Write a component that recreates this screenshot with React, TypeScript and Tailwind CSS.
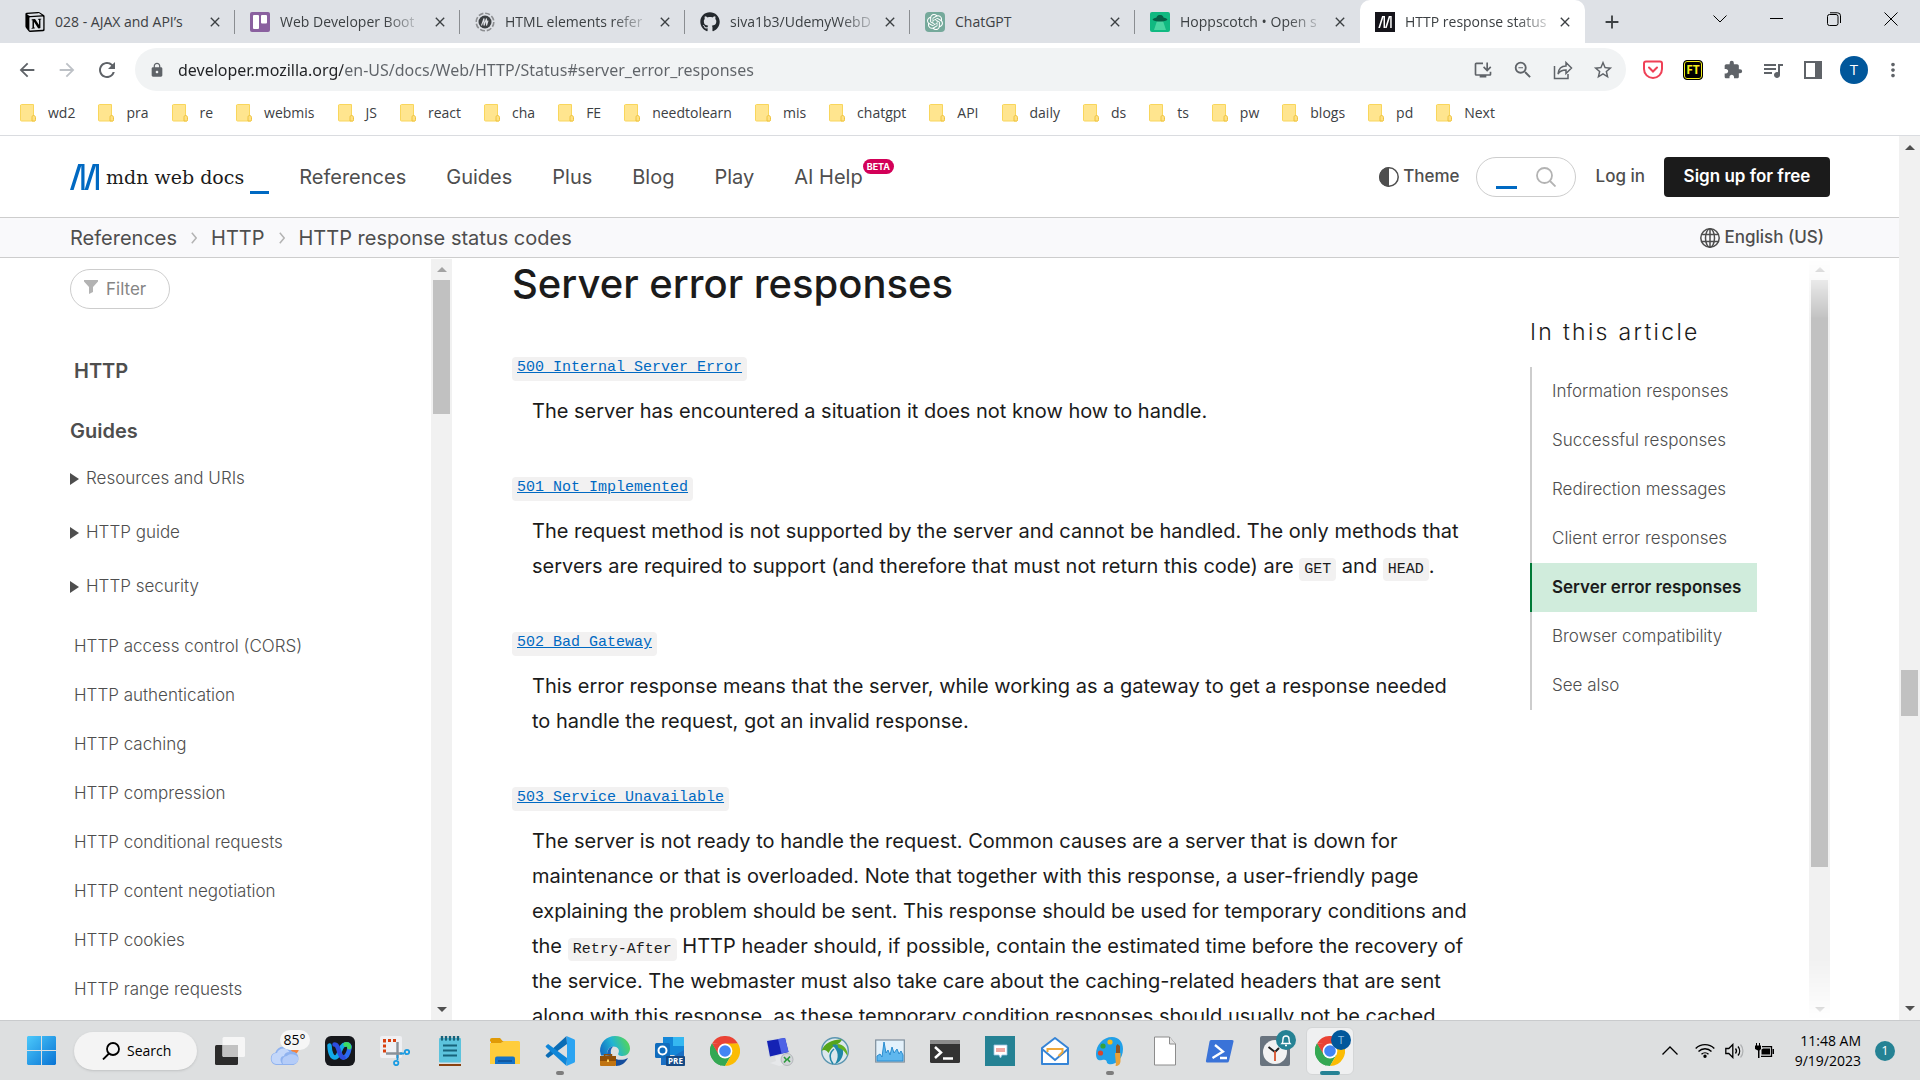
import type { ReactNode } from "react";
import { FaGithub } from "react-icons/fa";
import { SiNotion, SiOpenai } from "react-icons/si";
import {
  MdAdd,
  MdArrowBack,
  MdArrowForward,
  MdClose,
  MdExtension,
  MdLock,
  MdMoreVert,
  MdOutlineInstallDesktop,
  MdQueueMusic,
  MdRefresh,
  MdStarBorder,
  MdZoomOut,
} from "react-icons/md";

/* ---------- Browser chrome ---------- */

function MdnMark({ className }: { className?: string }) {
  return (
    <svg viewBox="0 0 29 26" className={className} fill="currentColor" aria-hidden="true">
      <path d="M8.200 0h3.600L3.600 26H0zM11.300 0h3.200v26h-3.200zM22.700 0h3.600L18.100 26h-3.600zM25.800 0H29v26h-3.200z" />
    </svg>
  );
}

const tabs: { title: string; icon: ReactNode; faded?: boolean; active?: boolean }[] = [
  { title: "028 - AJAX and API’s", icon: <SiNotion className="size-5 text-black" /> },
  {
    title: "Web Developer Boot",
    faded: true,
    icon: (
      <svg viewBox="0 0 20 20" className="size-5">
        <rect width="20" height="20" rx="2" fill="#8a609f" />
        <rect x="3" y="3" width="6" height="14" rx="1" fill="#fff" />
        <rect x="11" y="3" width="6" height="8.500" rx="1" fill="#fff" />
      </svg>
    ),
  },
  {
    title: "HTML elements refer",
    faded: true,
    icon: (
      <svg viewBox="0 0 20 20" className="size-5">
        <circle cx="10" cy="10" r="8.800" fill="none" stroke="#8b8d90" strokeWidth="1.600" strokeDasharray="5 1.900" />
        <circle cx="10" cy="10" r="6.500" fill="#3c4043" />
        <path d="M6.500 13.500 9 6.500v7l2.500-7v7l1.500-5" fill="none" stroke="#dee1e6" strokeWidth="1.100" />
      </svg>
    ),
  },
  { title: "siva1b3/UdemyWebD", faded: true, icon: <FaGithub className="size-5 text-[#24292e]" /> },
  {
    title: "ChatGPT",
    icon: (
      <span className="flex size-5 items-center justify-center rounded-sm bg-[#75a99b]">
        <SiOpenai className="size-4 text-white" />
      </span>
    ),
  },
  {
    title: "Hoppscotch • Open s",
    faded: true,
    icon: (
      <svg viewBox="0 0 20 20" className="size-5">
        <rect width="20" height="20" rx="2" fill="#10b981" />
        <path d="m7 9-3 9h12l-3-9z" fill="#6ee7b7" opacity=".6" />
        <path d="M2.500 7.500C4 6 6 5.800 6.500 5.600 7 3.500 8.500 3 10 3s3 .5 3.500 2.600c.5.200 2.500.4 4 1.900-1 1.500-4 2-7.500 2s-6.500-.5-7.500-2z" fill="#065f46" />
      </svg>
    ),
  },
  {
    title: "HTTP response status",
    faded: true,
    active: true,
    icon: (
      <span className="flex size-5 items-center justify-center bg-[#15141a]">
        <MdnMark className="h-3 w-4 text-white" />
      </span>
    ),
  },
];

function TabStrip() {
  return (
    <div className="flex h-[43px] shrink-0 items-stretch bg-[#dee1e6] pl-[10px] text-[#3c4043]">
      <div role="tablist" className="flex min-w-0">
        {tabs.map((t, i) => (
          <div
            key={t.title}
            role="tab"
            aria-selected={!!t.active}
            className={
              "flex w-[225px] min-w-0 items-center pl-[15px] pr-[10px] " + (t.active ? "rounded-t-[10px] bg-white" : "")
            }
          >
            {t.icon}
            <span className="ml-[10px] min-w-0 flex-1 whitespace-nowrap text-sm">
              <span
                className={
                  t.faded ? "[mask-image:linear-gradient(to_right,black_78%,rgb(0_0_0/0.25))]" : ""
                }
              >
                {t.title}
              </span>
            </span>
            <button aria-label={"Close " + t.title} className="ml-1 flex size-5 items-center justify-center">
              <MdClose className="size-4" />
            </button>
            {i < 5 ? <span className="-mr-[10px] ml-[9px] h-6 w-px bg-[#8a8d91]" /> : null}
          </div>
        ))}
      </div>
      <button aria-label="New tab" className="ml-[15px] flex w-6 items-center justify-center">
        <MdAdd className="size-[22px]" />
      </button>
      <div className="ml-auto flex pb-[6px] text-black">
        <button aria-label="Search tabs" className="flex w-[57px] items-center justify-center">
          <svg viewBox="0 0 14 8" className="h-2 w-[14px]" fill="none" stroke="currentColor">
            <path d="m.5.500 6.500 6.500 6.500-6.500" />
          </svg>
        </button>
        <button aria-label="Minimize" className="flex w-[57px] items-center justify-center">
          <span className="h-px w-[13px] bg-black" />
        </button>
        <button aria-label="Restore" className="flex w-[57px] items-center justify-center">
          <svg viewBox="0 0 14 14" className="size-[14px]" fill="none" stroke="currentColor">
            <rect x=".5" y="2.500" width="10.500" height="11" rx="2" />
            <path d="M3 .8h7.500a3 3 0 0 1 3 3V11" />
          </svg>
        </button>
        <button aria-label="Close window" className="flex w-[58px] items-center justify-center">
          <svg viewBox="0 0 14 14" className="size-[14px]" stroke="currentColor">
            <path d="m.5.500 13 13M13.500.500l-13 13" />
          </svg>
        </button>
      </div>
    </div>
  );
}

const iconButton = "flex w-10 shrink-0 items-center justify-center";

function AddressBar() {
  return (
    <div className="flex h-[53px] shrink-0 items-center px-[7px] text-[#5f6368]">
      <button aria-label="Back" className={iconButton}>
        <MdArrowBack className="size-[22px]" />
      </button>
      <button aria-label="Forward" className={iconButton}>
        <MdArrowForward className="size-[22px] text-[#bdc1c6]" />
      </button>
      <button aria-label="Reload" className={iconButton}>
        <MdRefresh className="size-6" />
      </button>
      <div className="ml-2 flex h-[43px] min-w-0 flex-1 items-center rounded-full bg-[#f1f3f4] pl-[14px] pr-[3px]">
        <MdLock className="size-4 shrink-0" />
        <input
          aria-label="Address and search bar"
          defaultValue="developer.mozilla.org/en-US/docs/Web/HTTP/Status#server_error_responses"
          className="ml-[13px] min-w-0 flex-1 bg-[linear-gradient(to_right,#202124_165px,#5f6368_165px)] bg-clip-text font-['Noto_Sans',sans-serif] text-base text-transparent outline-none"
        />
        <button aria-label="Install app" className={iconButton}>
          <MdOutlineInstallDesktop className="size-5" />
        </button>
        <button aria-label="Zoom" className={iconButton}>
          <MdZoomOut className="size-[22px]" />
        </button>
        <button aria-label="Share" className={iconButton}>
          <svg viewBox="0 0 20 20" className="size-5" fill="none" stroke="currentColor" strokeWidth="1.500">
            <path d="M1.500 6v12.500H15V14M5 14c.5-5 3.500-8 8-8V2.500l5.500 5.500-5.500 5.500V10c-4 0-6.500 1.500-8 4z" />
          </svg>
        </button>
        <button aria-label="Bookmark" className={iconButton}>
          <MdStarBorder className="size-[22px]" />
        </button>
      </div>
      <div className="ml-[7px] flex items-center">
        <button aria-label="Pocket" className={iconButton}>
          <svg viewBox="0 0 20 20" className="size-5" fill="none" stroke="#ef4056" strokeWidth="2">
            <path d="M1 3.500C1 2 1.500 1.500 3 1.500h14c1.500 0 2 .5 2 2V9c0 5-4 9-9 9s-9-4-9-9z" />
            <path d="m6 7.500 4 4 4-4" strokeLinecap="round" />
          </svg>
        </button>
        <button aria-label="Font tool" className={iconButton}>
          <span className="flex size-5 items-center justify-center rounded-sm border border-black bg-black text-[12px] font-bold leading-none text-[#f4ee1a] ring-1 ring-inset ring-[#f4ee1a]">
            FT
          </span>
        </button>
        <button aria-label="Extensions" className={iconButton}>
          <MdExtension className="size-5" />
        </button>
        <button aria-label="Media" className={iconButton}>
          <MdQueueMusic className="size-6" />
        </button>
        <button aria-label="Side panel" className={iconButton}>
          <svg viewBox="0 0 18 18" className="size-[18px]">
            <path d="M1 1h16v16H1z" fill="none" stroke="currentColor" strokeWidth="2" />
            <path d="M11 1h6v16h-6z" fill="currentColor" />
          </svg>
        </button>
        <button
          aria-label="Profile"
          className="ml-[7px] flex size-7 items-center justify-center rounded-full bg-[#01579b] text-[15px] text-white"
        >
          T
        </button>
        <button aria-label="Menu" className="ml-[5px] flex w-10 items-center justify-center">
          <MdMoreVert className="size-[22px]" />
        </button>
      </div>
    </div>
  );
}

const bookmarks = [
  "wd2", "pra", "re", "webmis", "JS", "react", "cha", "FE", "needtolearn", "mis",
  "chatgpt", "API", "daily", "ds", "ts", "pw", "blogs", "pd", "Next",
];

function BookmarksBar() {
  return (
    <nav aria-label="Bookmarks" className="flex h-10 shrink-0 items-center gap-[23px] border-b border-[#dadce0] px-5 pb-[5px] text-sm text-[#3c4043]">
      {bookmarks.map((b) => (
        <button key={b} className="flex items-center gap-3 whitespace-nowrap">
          <svg viewBox="0 0 16 18" className="h-[18px] w-4">
            <path d="M1.500.5h12v13h1.500v3.500H1.500a1 1 0 0 1-1-1v-15z" fill="#ffe58f" stroke="#f9d65c" />
            <path d="M13.500 11.500c-1 0-1.500.5-1.500 2V17h2.500c.8 0 1-.5 1-1.500v-2c0-1-.6-2-2-2z" fill="#ffe083" stroke="#eec33d" />
          </svg>
          {b}
        </button>
      ))}
    </nav>
  );
}

/* ---------- Site header ---------- */

function SiteHeader() {
  return (
    <header className="flex h-[81px] shrink-0 items-center pl-[70px] pr-[69px] text-[#4e4e4e]">
      <a href="#home" aria-label="mdn web docs" className="flex shrink-0 items-center pt-px">
        <MdnMark className="h-[26px] w-[29px] text-[#0069c2]" />
        <span className="ml-[7px] font-['DejaVu_Serif',serif] text-[19px] text-[#1b1b1b]">mdn web docs</span>
        <span className="ml-[6px] mt-[31px] h-[3px] w-[19px] bg-[#0069c2]" />
      </a>
      <nav aria-label="Main" className="ml-[30px] flex gap-10 text-xl leading-none">
        {["References", "Guides", "Plus", "Blog", "Play"].map((n) => (
          <button key={n}>{n}</button>
        ))}
        <a href="#ai-help" className="relative">
          AI Help
          <span className="absolute -top-2 left-full flex h-[15px] items-center rounded-full bg-[#d30058] px-1 text-[9px] font-bold text-white">
            BETA
          </span>
        </a>
      </nav>
      <div className="ml-auto flex shrink-0 items-center text-[17px] font-medium">
        <button className="flex items-center gap-1">
          <svg viewBox="0 0 20 20" className="size-5">
            <circle cx="10" cy="10" r="9.200" fill="none" stroke="currentColor" strokeWidth="1.500" />
            <path d="M10 0a10 10 0 0 0 0 20z" fill="currentColor" />
          </svg>
          Theme
        </button>
        <label className="ml-4 flex h-10 w-[100px] items-center rounded-full border border-[#cdcdcd] px-[19px]">
          <span className="mt-[21px] h-[3px] w-[21px] shrink-0 bg-[#0069c2]" />
          <input aria-label="Search" className="w-0 min-w-0 flex-1 outline-none" />
          <svg viewBox="0 0 20 20" className="size-5 shrink-0" fill="none" stroke="#b3b3b3" strokeWidth="1.800">
            <circle cx="8.500" cy="8.500" r="7.500" />
            <path d="m14 14 5.500 5.500" />
          </svg>
        </label>
        <a href="#login" className="ml-5">
          Log in
        </a>
        <a href="#signup" className="ml-[19px] flex h-10 w-[166px] items-center justify-center rounded bg-[#1b1b1b] font-semibold text-white">
          Sign up for free
        </a>
      </div>
    </header>
  );
}

function Crumb() {
  return (
    <svg viewBox="0 0 6 12" className="mx-[14px] h-3 w-[6px]" fill="none" stroke="#b3b3b3" strokeWidth="1.500">
      <path d="m.8.800 4.400 5.200L.8 11.200" />
    </svg>
  );
}

function Breadcrumbs() {
  return (
    <div className="flex h-[41px] shrink-0 items-center border-y border-[#cdcdcd] bg-[#f9f9fb] pl-[70px] pr-[75px] text-xl leading-none text-[#4e4e4e]">
      <a href="#references">References</a>
      <Crumb />
      <a href="#http">HTTP</a>
      <Crumb />
      <a href="#status">HTTP response status codes</a>
      <button className="ml-auto flex items-center gap-1 text-[17px] font-medium">
        <svg viewBox="0 0 20 20" className="size-5" fill="none" stroke="currentColor" strokeWidth="1.500">
          <circle cx="10" cy="10" r="9.200" />
          <ellipse cx="10" cy="10" rx="4.500" ry="9.200" />
          <path d="M10 .8v18.400M1.800 6.500h16.400M1.800 13.500h16.400" />
        </svg>
        English (US)
      </button>
    </div>
  );
}

/* ---------- Scrollbars ---------- */

function Arrow({ down, className }: { down?: boolean; className?: string }) {
  return (
    <svg viewBox="0 0 10 5" className={"h-[5px] w-[10px] shrink-0 " + (className ?? "")} fill="currentColor">
      <path d={down ? "M0 0h10L5 5z" : "M0 5h10L5 0z"} />
    </svg>
  );
}

/* ---------- Sidebar ---------- */

const groups = ["Resources and URIs", "HTTP guide", "HTTP security"];
const pages = [
  "HTTP access control (CORS)",
  "HTTP authentication",
  "HTTP caching",
  "HTTP compression",
  "HTTP conditional requests",
  "HTTP content negotiation",
  "HTTP cookies",
  "HTTP range requests",
];

function Sidebar() {
  return (
    <aside className="flex w-[452px] shrink-0 overflow-hidden text-[17px] text-[#4e4e4e]">
      <div className="flex-1 pl-[70px] pt-[11px]">
        <label className="flex h-10 w-[100px] items-center rounded-full border border-[#cdcdcd] pl-[13px] pr-3">
          <svg viewBox="0 0 14 14" className="mb-1 size-[14px] shrink-0" fill="#b3b3b3">
            <path d="M0 0h14v1.500L9 7v5l-4 2V7L0 1.500z" />
          </svg>
          <input
            aria-label="Filter"
            placeholder="Filter"
            className="ml-2 w-0 min-w-0 flex-1 pt-0.5 outline-none placeholder:text-[#858585]"
          />
        </label>
        <a href="#http" className="mt-[47px] block pl-1 text-xl leading-[30px] font-semibold">
          HTTP
        </a>
        <h2 className="mt-[30px] text-xl leading-[30px] font-semibold">Guides</h2>
        <div className="mt-[6px] font-light">
          {groups.map((g) => (
            <details key={g}>
              <summary className="flex h-[54px] list-none items-center gap-[7px]">
                <svg viewBox="0 0 9 12" className="h-3 w-[9px]" fill="currentColor">
                  <path d="m0 0 9 6-9 6z" />
                </svg>
                {g}
              </summary>
            </details>
          ))}
        </div>
        <ul className="mt-2 pl-1 font-light">
          {pages.map((p) => (
            <li key={p}>
              <a href="#page" className="flex h-[49px] items-center">
                {p}
              </a>
            </li>
          ))}
        </ul>
      </div>
      <div aria-hidden="true" className="mt-px flex w-[21px] flex-col items-center bg-[#f1f1f1] py-[8px]">
        <Arrow className="text-[#a3a3a3]" />
        <span className="mt-2 h-[134px] w-[17px] bg-[#c1c1c1]" />
        <Arrow down className="mt-auto text-[#505050]" />
      </div>
    </aside>
  );
}

/* ---------- Article ---------- */

function Code({ children }: { children: ReactNode }) {
  return (
    <code className="rounded bg-[#f2f1f1] px-[5px] py-[3px] font-['Liberation_Mono',monospace] text-[15px]">{children}</code>
  );
}

const responses: { name: string; lines: ReactNode[] }[] = [
  {
    name: "500 Internal Server Error",
    lines: ["The server has encountered a situation it does not know how to handle."],
  },
  {
    name: "501 Not Implemented",
    lines: [
      "The request method is not supported by the server and cannot be handled. The only methods that",
      <>
        servers are required to support (and therefore that must not return this code) are <Code>GET</Code> and{" "}
        <Code>HEAD</Code>.
      </>,
    ],
  },
  {
    name: "502 Bad Gateway",
    lines: [
      "This error response means that the server, while working as a gateway to get a response needed",
      "to handle the request, got an invalid response.",
    ],
  },
  {
    name: "503 Service Unavailable",
    lines: [
      "The server is not ready to handle the request. Common causes are a server that is down for",
      "maintenance or that is overloaded. Note that together with this response, a user-friendly page",
      "explaining the problem should be sent. This response should be used for temporary conditions and",
      <>
        the <Code>Retry-After</Code> HTTP header should, if possible, contain the estimated time before the recovery of
      </>,
      "the service. The webmaster must also take care about the caching-related headers that are sent",
      "along with this response, as these temporary condition responses should usually not be cached.",
    ],
  },
];

function Article() {
  return (
    <main className="ml-[60px] min-w-0 flex-1 overflow-hidden text-[#1b1b1b]">
      <h1 className="whitespace-nowrap text-[40px] leading-[52px] font-medium">Server error responses</h1>
      <dl className="mt-[41px]">
        {responses.map((r) => (
          <div key={r.name} className="mb-[42px]">
            <dt className="flex h-[35px] items-center">
              <a
                href="#status-code"
                className="flex h-6 items-center rounded bg-[#f2f1f1] px-[5px] font-['Liberation_Mono',monospace] text-[15px] text-[#0069c2] underline"
              >
                {r.name}
              </a>
            </dt>
            <dd className="mt-2 pl-5 text-xl leading-[35px] whitespace-nowrap">
              {r.lines.map((l, i) => (
                <div key={i} className="h-[35px]">
                  {l}
                </div>
              ))}
            </dd>
          </div>
        ))}
      </dl>
    </main>
  );
}

const sections = [
  "Information responses",
  "Successful responses",
  "Redirection messages",
  "Client error responses",
  "Server error responses",
  "Browser compatibility",
  "See also",
];

function TableOfContents() {
  return (
    <aside className="mr-[69px] flex w-[300px] shrink-0 overflow-hidden">
      <nav aria-label="In this article" className="w-[227px] pt-[58px]">
        <h2 className="text-[23px] leading-[32px] font-light tracking-widest whitespace-nowrap text-[#1b1b1b]">In this article</h2>
        <ul className="mt-[19px] text-[17px] text-[#4e4e4e]">
          {sections.map((s) => (
            <li key={s}>
              <a
                href="#section"
                className={
                  "flex h-[49px] items-center border-l-2 pl-5 pt-px " +
                  (s === "Server error responses"
                    ? "border-[#007936] bg-[#d0ecdc] font-semibold text-[#1b1b1b]"
                    : "border-[#cdcdcd] font-light")
                }
              >
                {s}
              </a>
            </li>
          ))}
        </ul>
      </nav>
      <div
        aria-hidden="true"
        className="ml-auto mt-px flex w-[21px] flex-col items-center bg-[#f1f1f1] py-[8px] [mask-image:linear-gradient(to_bottom,transparent,black_60px,black_700px,transparent)]"
      >
        <Arrow className="text-[#505050]" />
        <span className="mt-2 h-[587px] w-[17px] bg-[#c1c1c1]" />
        <Arrow down className="mt-auto text-[#505050]" />
      </div>
    </aside>
  );
}

/* ---------- Taskbar ---------- */

function Chrome() {
  return (
    <svg viewBox="0 0 30 30" className="size-[30px]">
      <path d="M2 7.500A15 15 0 0 1 28 7.500L15 8.500z" fill="#ea4335" />
      <path d="M2 7.500A15 15 0 0 0 15 30l6.500-11.200H9z" fill="#34a853" />
      <path d="M2 7.500 8.600 18.800 15 8.300z" fill="#ea4335" />
      <path d="M28 7.500A15 15 0 0 1 15 30l6.500-11.200L15 7.500z" fill="#fbbc04" />
      <path d="M2 7.500 8.600 18.800A7.400 7.400 0 0 0 15 22.500l-4.200 6.900A15 15 0 0 1 2 7.500z" fill="#34a853" />
      <circle cx="15" cy="15" r="7.400" fill="#fff" />
      <circle cx="15" cy="15" r="5.800" fill="#4285f4" />
    </svg>
  );
}

const icon = "size-[30px]";

const apps: { name: string; icon: ReactNode; open?: boolean }[] = [
  {
    name: "Task view",
    icon: (
      <svg viewBox="0 0 30 30" className={icon}>
        <rect y="9" width="23" height="20" rx="1.500" fill="#2b2b2b" />
        <rect x="7.500" y="1" width="22.500" height="20" rx="1.500" fill="#f6f6f6" />
        <path d="M7.500 9H23v12H9a1.500 1.500 0 0 1-1.500-1.500z" fill="#c2c2c2" />
      </svg>
    ),
  },
  {
    name: "Weather",
    icon: (
      <span className="relative block size-[30px]">
        <svg viewBox="0 0 30 30" className={icon}>
          <circle cx="22" cy="12" r="7" fill="#f4833d" />
          <path d="M6 29a6.500 6.500 0 0 1-.6-12.600A9 9 0 0 1 22 15.500 6.900 6.900 0 0 1 23.500 29z" fill="#8fb2ef" />
          <path d="M6 28a5.500 5.500 0 0 1 1-10.900c1.500-5 9-6.500 12.500-1.100-3 0-5 1.500-5.500 4-3 0-5 3-2 8z" fill="#c3d7fa" />
          <path d="M13 28c-2-5 1-8 4-8 2-3 10-2 11.500 2 0 3-2 6-5 6z" fill="#b4ccf8" />
        </svg>
        <span className="absolute -top-[6px] left-[10px] flex h-5 w-[30px] items-center justify-center rounded-full bg-[#f6f6f6] text-sm text-black">
          85°
        </span>
      </span>
    ),
  },
  {
    name: "Webex",
    icon: (
      <svg viewBox="0 0 30 30" className={icon}>
        <rect width="30" height="30" rx="6" fill="#16181c" />
        <path d="M20.500 8.500c3-.8 4.500 1 4 3.500-.8 5-3 9.500-6 9.500" fill="none" stroke="#2a6bf2" strokeWidth="4.500" strokeLinecap="round" />
        <path d="M4.500 9.500c.3 6 2 12 5.500 12 5 0 4.500-13 10.500-13" fill="none" stroke="#12a9e8" strokeWidth="4.500" strokeLinecap="round" />
        <path d="M9.500 8.500c5 0 4 13 9 13" fill="none" stroke="#2d4de0" strokeWidth="4.500" strokeLinecap="round" />
        <path d="M20.500 8.500c2.500-.6 3.700.7 3.700 2.800" fill="none" stroke="#3ddc63" strokeWidth="4.500" strokeLinecap="round" />
      </svg>
    ),
  },
  {
    name: "Snipping Tool",
    icon: (
      <svg viewBox="0 0 30 30" className={icon}>
        <rect width="22" height="22" rx="2" fill="#eff0f3" />
        <path d="M4.500 16.500V3M3 4.500h13" fill="none" stroke="#d9400f" strokeWidth="3" strokeDasharray="3 2" />
        <path d="M6 17.500h16M17.500 6v16" stroke="#8a9199" strokeWidth="2.400" />
        <path d="M17.500 19v5M20 17.500h4" stroke="#199be2" strokeWidth="1.800" />
        <circle cx="16.200" cy="27" r="2.200" fill="none" stroke="#199be2" strokeWidth="1.800" />
        <circle cx="27" cy="16" r="2.200" fill="none" stroke="#199be2" strokeWidth="1.800" />
      </svg>
    ),
  },
  {
    name: "Notepad",
    icon: (
      <svg viewBox="0 0 30 30" className={icon}>
        <path d="M4 28h22v2H4z" fill="#8a4210" />
        <rect x="4" y="2" width="22" height="24.500" rx="1" fill="#5cc3dd" />
        <path d="M7 .5v3m4-3v3m4-3v3m4-3v3m4-3v3" stroke="#17637b" strokeWidth="2.400" strokeLinecap="round" />
        <path d="M8 9.500h14M8 14.500h14M8 19.500h14" stroke="#17637b" strokeWidth="1.800" />
      </svg>
    ),
  },
  {
    name: "File Explorer",
    icon: (
      <svg viewBox="0 0 30 30" className={icon}>
        <path d="M0 4a2 2 0 0 1 2-2h8l3 3.500H0z" fill="#e09a06" />
        <path d="M0 7h11l3-2h14.500A1.500 1.500 0 0 1 30 6.500V28H0z" fill="#ffcd3c" />
        <path d="M0 4h1v3h10l3-2H12z" fill="#e09a06" />
        <path d="M5 28v-5.500a2 2 0 0 1 2-2h16a2 2 0 0 1 2 2V28z" fill="#1573c9" />
        <path d="M8 25h14" stroke="#0d4f94" strokeWidth="1.500" />
      </svg>
    ),
  },
  {
    name: "Visual Studio Code",
    open: true,
    icon: (
      <svg viewBox="0 0 30 30" className={icon}>
        <path d="M21.500 0 1 18.800a1 1 0 0 0 0 1.500l1.500 1.300a1 1 0 0 0 1.300 0L22 8z" fill="#0a6cb5" />
        <path d="M21.500 30 1 11.200a1 1 0 0 1 0-1.500l1.500-1.300a1 1 0 0 1 1.300 0L22 22z" fill="#0f86d8" />
        <path d="M21.500 0 29 3.300a1.500 1.500 0 0 1 1 1.500v20.400a1.500 1.500 0 0 1-1 1.500L21.500 30c.3-.3.500-.7.500-1.200V1.200c0-.5-.2-.9-.5-1.200z" fill="#2ba4f2" />
      </svg>
    ),
  },
  {
    name: "Microsoft Edge",
    icon: (
      <svg viewBox="0 0 30 30" className={icon}>
        <defs>
          <linearGradient id="edge" x1="0" y1=".6" x2="1" y2=".3">
            <stop offset="0" stopColor="#1572c4" />
            <stop offset=".45" stopColor="#22b4d3" />
            <stop offset="1" stopColor="#58d84f" />
          </linearGradient>
        </defs>
        <path d="M0 15C0 6.500 6.500 0 15 0s15 6 15 12.500c0 4.500-3.300 7.500-7.500 7.500-3.500 0-5-1.300-4-3 1.500-3.500-1-6.500-5-6.500-5 0-6.500 4-6.500 9H1z" fill="url(#edge)" />
        <path d="M7 19.500c0-5 2-9 6.500-9-3 2-3.500 6-1.500 10z" fill="#1a63b8" />
        <path d="M28 22c-2.500 5-7 8-12 8v-7c4 1.500 8 1 12-1z" fill="#154e9d" />
        <rect y="20" width="16" height="10" rx="1" fill="#c07412" />
        <path d="M0 20h16v5H0z" fill="#8f4e08" />
        <path d="M4.500 20v-1.300h7V20" fill="none" stroke="#8f4e08" strokeWidth="1.400" />
        <path d="M7 23.500h2v2.500H7z" fill="#ffd35c" />
      </svg>
    ),
  },
  {
    name: "Outlook",
    icon: (
      <svg viewBox="0 0 30 30" className={icon}>
        <path d="M8 1h21v18H8z" fill="#1487d8" />
        <path d="M18 1h11v9H18z" fill="#35b8f1" />
        <path d="M6 14l11 7 12-7v15H6z" fill="#1a6fc4" />
        <rect y="7" width="15" height="15" rx="1.500" fill="#0f6cbd" />
        <circle cx="7.500" cy="14.500" r="4" fill="none" stroke="#fff" strokeWidth="2" />
        <rect x="11" y="20" width="19" height="10" rx="1" fill="#154a86" />
        <text x="20.500" y="28" fontSize="8" fontWeight="700" fill="#fff" textAnchor="middle">PRE</text>
      </svg>
    ),
  },
  { name: "Google Chrome", icon: <Chrome /> },
  {
    name: "Remote Desktop",
    icon: (
      <svg viewBox="0 0 30 30" className={icon}>
        <path d="m1 4 20-3 4 16-21 5z" fill="#d5dae2" />
        <path d="m2 5 18-3 3.500 14L5 20.500z" fill="#1422b4" />
        <path d="m13 3 7-1 3.500 14-7 1.500z" fill="#4d62e6" />
        <path d="m10 20.500 6-1.500 1 6 6 3-9 2-9-3 6-2z" fill="#e6e8ea" />
        <circle cx="22" cy="23.500" r="6" fill="#d2d5d8" stroke="#a9adb1" strokeWidth=".8" />
        <path d="m19 21 2.500 2.700L19 26.500M25 20.500l-2.500 2.700 2.500 2.800" fill="none" stroke="#2c9a3b" strokeWidth="1.600" />
      </svg>
    ),
  },
  {
    name: "VPN client",
    icon: (
      <svg viewBox="0 0 30 30" className={icon}>
        <circle cx="15" cy="15" r="13.300" fill="#dce7ec" stroke="#5b96b1" strokeWidth="1.400" />
        <path d="M1.500 15C4 7 13 3 22 3.500 20 9 13 8 8.500 17 6.500 14 4 13 1.500 15z" fill="#55a51c" />
        <path d="M12 9c8-2 12 3 11 9-1 5-4 9-8 10 4-6 4-13-3-19z" fill="#2087a8" />
        <path d="M14 13c-5 4-5 10-1 15" fill="none" stroke="#2087a8" strokeWidth="1.600" />
        <path d="M17 8c7 0 11 6 10.500 12-3-5-5-7-9-8z" fill="#62b023" />
      </svg>
    ),
  },
  {
    name: "Performance Monitor",
    icon: (
      <svg viewBox="0 0 30 30" className={icon}>
        <rect x=".7" y="4" width="28.600" height="22" fill="#e3f1fb" stroke="#7d8e9c" strokeWidth="1.200" />
        <path d="M2 25v-5l3-2 2 3 2-15 2 11 2-3 2 5 2-8 2 6 3-4 2 5 2-3 2 4v6z" fill="#5fb7ee" stroke="#2b8dd0" />
      </svg>
    ),
  },
  {
    name: "Terminal",
    icon: (
      <svg viewBox="0 0 30 30" className={icon}>
        <rect y="4" width="30" height="23" rx="1.500" fill="#333" />
        <path d="M0 8V5.500A1.500 1.500 0 0 1 1.500 4h27A1.500 1.500 0 0 1 30 5.500V8z" fill="#8c8c8c" />
        <path d="m5 11 6 5.500-6 5.500" fill="none" stroke="#fff" strokeWidth="2.500" />
        <path d="M13 22.500h10" stroke="#fff" strokeWidth="2.500" />
      </svg>
    ),
  },
  {
    name: "Feedback",
    icon: (
      <svg viewBox="0 0 30 30" className={icon}>
        <path d="M0 0h30v30H0z" fill="#258294" />
        <path d="M9 9h13v10h-5l-1.500 3-1.500-3H9z" fill="#fff" stroke="#9cc7e6" strokeWidth=".8" />
        <path d="M11 12h9v4h-9z" fill="#f0a9a4" />
      </svg>
    ),
  },
  {
    name: "Mail",
    icon: (
      <svg viewBox="0 0 30 30" className={icon}>
        <path d="M2 12 15 2l13 10v16H2z" fill="#fff" stroke="#3584d6" strokeWidth="2" strokeLinejoin="round" />
        <path d="m2 13 13 11 13-11" fill="none" stroke="#3584d6" strokeWidth="2" />
        <path d="M7.500 16v-3h15v3l-4 4" fill="none" stroke="#f0a93b" strokeWidth="2" />
      </svg>
    ),
  },
  {
    name: "Paint",
    open: true,
    icon: (
      <svg viewBox="0 0 30 30" className={icon}>
        <path d="M17 1C8 1 1 9 1 18c0 6 3 7 6 6s5 0 5 3c4 4 16-1 16-14C28 6 24 1 17 1z" fill="#21a0e8" />
        <circle cx="8" cy="10" r="2.600" fill="#35a13a" />
        <circle cx="15" cy="6" r="2.600" fill="#f5b81c" />
        <circle cx="5.500" cy="17" r="2.600" fill="#d8442c" />
        <path d="m21 10 1.500-2L25 10v8h-4z" fill="#8d5524" />
        <path d="M20 17h5.500v8c0 3-2 5-5 5 1-2-.5-8-.5-13z" fill="#e8a23a" />
      </svg>
    ),
  },
  {
    name: "Document",
    icon: (
      <svg viewBox="0 0 30 30" className={icon}>
        <path d="M4.500 1h15l6 7v21h-21z" fill="#fff" stroke="#8c8c8c" />
        <path d="M19.500 1v7h6" fill="#e2e2e2" stroke="#8c8c8c" />
      </svg>
    ),
  },
  {
    name: "PowerShell",
    icon: (
      <svg viewBox="0 0 30 30" className={icon}>
        <path d="M6 4h21a1.500 1.500 0 0 1 1.400 2L24 25a2 2 0 0 1-2 1.500H2.500A1.500 1.500 0 0 1 1 24.500L4.500 5.500A2 2 0 0 1 6 4z" fill="#3a73d8" />
        <path d="m10 9 8 6.500L7.500 22M15 22h7" fill="none" stroke="#fff" strokeWidth="2.300" />
      </svg>
    ),
  },
  {
    name: "Clock",
    icon: (
      <span className="relative block size-[30px]">
        <svg viewBox="0 0 30 30" className={icon}>
          <rect width="30" height="30" rx="2" fill="#69747f" />
          <circle cx="15" cy="16" r="12" fill="#f2f2f2" />
          <path d="M15 16 8.500 11M15 16l4-4" stroke="#222" strokeWidth="2" />
          <path d="M15 15v10" stroke="#d9532c" strokeWidth="1.800" />
        </svg>
        <svg viewBox="0 0 20 20" className="absolute -right-[6px] -top-[6px] size-5">
          <circle cx="10" cy="10" r="10" fill="#258294" />
          <path d="M6 13.500c1-1 1-2 1-4.500a3 3 0 0 1 6 0c0 2.500 0 3.500 1 4.500zM9 15.500h2" fill="none" stroke="#fff" strokeWidth="1.400" />
        </svg>
      </span>
    ),
  },
];

function Taskbar() {
  return (
    <footer className="flex h-[60px] shrink-0 items-center border-t border-[#c9cbcd] bg-[#dddfe0] pl-[27px] pr-[25px] font-['Open_Sans',sans-serif] text-black">
      <button aria-label="Start">
        <svg viewBox="0 0 29 29" className="size-[29px]">
          <defs>
            <linearGradient id="win" x1="0" y1="0" x2="1" y2="1">
              <stop offset="0" stopColor="#4cc9fb" />
              <stop offset="1" stopColor="#0873d4" />
            </linearGradient>
          </defs>
          <path d="M1 0h13v14H0V1zM15 0h13l1 1v13H15zM0 15h14v14H1l-1-1zM15 15h14v13l-1 1H15z" fill="url(#win)" />
        </svg>
      </button>
      <button className="ml-[18px] flex h-[38px] w-[123px] items-center rounded-full bg-[#f4f4f4] pl-7 text-sm shadow-sm">
        <svg viewBox="0 0 18 18" className="mr-[7px] size-[18px]" fill="none" stroke="currentColor" strokeWidth="1.800">
          <circle cx="11" cy="7" r="6" />
          <path d="m7 11.500-6 6" />
        </svg>
        Search
      </button>
      <div className="ml-[5px] flex h-full items-stretch">
        {apps.map((a) => (
          <button key={a.name} aria-label={a.name} className="relative flex w-[55px] items-center justify-center">
            {a.icon}
            {a.open ? <span className="absolute bottom-[5px] h-1 w-2 rounded-full bg-[#7d7d7d]" /> : null}
          </button>
        ))}
        <button aria-label="Google Chrome, profile T" className="relative flex w-[55px] items-center justify-center">
          <span className="flex size-12 items-center justify-center rounded-md border border-[#d4d6d7] bg-[#eff0f1]">
            <Chrome />
          </span>
          <span className="absolute right-[6px] top-[9px] flex size-5 items-center justify-center rounded-full bg-[#01579b] text-[11px] text-[#8fc0ea]">
            T
          </span>
          <span className="absolute bottom-[5px] h-1 w-5 rounded-full bg-[#258294]" />
        </button>
      </div>
      <div className="ml-auto flex items-center">
        <button aria-label="Show hidden icons">
          <svg viewBox="0 0 16 9" className="h-[9px] w-4" fill="none" stroke="currentColor" strokeWidth="1.300">
            <path d="m.5 8.500 7.500-7.500 7.500 7.500" />
          </svg>
        </button>
        <button aria-label="Network, volume and battery" className="ml-[17px] flex items-center gap-[10px]">
          <svg viewBox="0 0 20 15" className="h-[15px] w-5" fill="none" stroke="currentColor" strokeWidth="1.400">
            <path d="M.7 5.500a13 13 0 0 1 18.600 0M3.500 8.500a9 9 0 0 1 13 0M6.500 11.300a5 5 0 0 1 7 0" />
            <circle cx="10" cy="13.300" r="1" fill="currentColor" />
          </svg>
          <svg viewBox="0 0 20 16" className="h-4 w-5" fill="none" stroke="currentColor" strokeWidth="1.300">
            <path d="M.8 5.500h3l4-4v13l-4-4h-3z" />
            <path d="M10.500 5.500a4 4 0 0 1 0 5M13 3.500a7 7 0 0 1 0 9" />
            <path d="M15.500 1.500a10 10 0 0 1 0 13" stroke="#b0b2b4" />
          </svg>
          <svg viewBox="0 0 20 16" className="h-4 w-5">
            <path d="M1 0h1v2.500h2V0h1v2.500h1V6L4.500 7.500V15H3V7.500L0 6V2.500h1z" fill="currentColor" />
            <path d="M7 3.700h9.500v9.600H6" fill="none" stroke="currentColor" strokeWidth="1.300" />
            <path d="M6.500 6.500 8 5.500h7v6H6.500zM17.500 6h1.500v5h-1.500z" fill="currentColor" />
          </svg>
        </button>
        <div className="ml-[18px] w-[68px] text-right text-sm leading-5 whitespace-nowrap">
          <div>11:48 AM</div>
          <div>9/19/2023</div>
        </div>
        <span className="ml-[14px] flex size-5 items-center justify-center rounded-full bg-[#258294] text-[13px] text-white">
          1
        </span>
      </div>
    </footer>
  );
}

export default function App() {
  return (
    <div className="flex h-screen flex-col overflow-hidden bg-white">
      <div className="font-['Open_Sans',sans-serif]">
        <TabStrip />
        <AddressBar />
        <BookmarksBar />
      </div>
      <div className="flex min-h-0 flex-1 font-['Inter',sans-serif]">
        <div className="flex min-w-0 flex-1 flex-col">
          <SiteHeader />
          <Breadcrumbs />
          <div className="flex min-h-0 flex-1">
            <Sidebar />
            <Article />
            <TableOfContents />
          </div>
        </div>
        <div aria-hidden="true" className="flex w-[21px] shrink-0 flex-col items-center bg-[#f1f1f1] py-[9px] text-[#505050]">
          <Arrow />
          <span className="mt-[520px] h-[46px] w-[17px] bg-[#c1c1c1]" />
          <Arrow down className="mt-auto" />
        </div>
      </div>
      <Taskbar />
    </div>
  );
}
